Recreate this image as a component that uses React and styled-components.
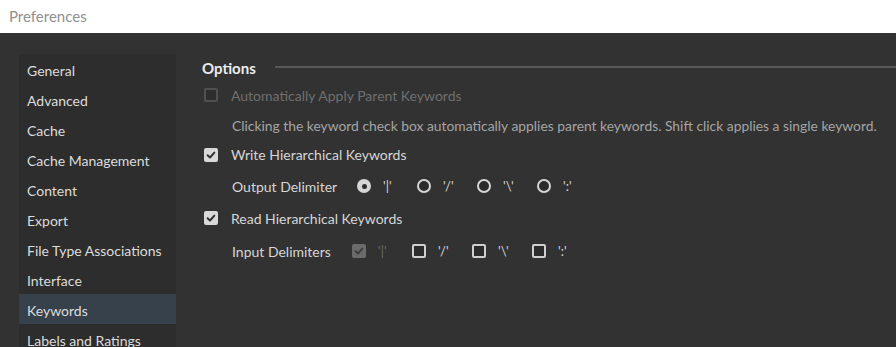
import React from "react";
import styled, { createGlobalStyle, css } from "styled-components";

const Global = createGlobalStyle`
  html, body { margin: 0; padding: 0; background: #323232; }
  body { font-family: Lato, "Noto Sans", sans-serif; overflow: hidden; }
`;

const Window = styled.div`
  width: 896px;
  height: 347px;
  display: flex;
  flex-direction: column;
  background: #323232;
`;

const TitleBar = styled.div`
  height: 33px;
  flex: none;
  background: #ffffff;
  color: #8f8f8f;
  font-size: 15px;
  display: flex;
  align-items: center;
  padding-left: 9px;
  padding-bottom: 2px;
  box-sizing: border-box;
`;

const Body = styled.div`
  flex: 1;
  display: flex;
  padding: 21px 0 0 19px;
  min-height: 0;
`;

const Sidebar = styled.nav`
  width: 157px;
  flex: none;
  background: #2d2d2d;
  display: flex;
  flex-direction: column;
`;

const NavItem = styled.div`
  height: 30px;
  flex: none;
  display: flex;
  align-items: center;
  padding-left: 8px;
  padding-top: 2px;
  box-sizing: border-box;
  font-size: 14px;
  color: #dcdcdc;
  background: ${(p) => (p.$active ? "#36414c" : "transparent")};
`;

const Main = styled.section`
  flex: 1;
  margin-left: 26px;
  display: flex;
  flex-direction: column;
`;

const Heading = styled.div`
  height: 24px;
  display: flex;
  align-items: center;
  gap: 19px;
  font-size: 15px;
  font-weight: 700;
  color: #ececec;
  margin-top: 2px;
`;

const Rule = styled.div`
  flex: 1;
  height: 2px;
  background: #585858;
  margin-top: -3px;
`;

const Row = styled.div`
  height: ${(p) => p.$h}px;
  display: flex;
  align-items: center;
  padding-left: ${(p) => (p.$indent ? 30 : 2)}px;
  font-size: ${(p) => p.$size || 14}px;
  color: ${(p) => p.$color || "#d6d6d6"};
`;

const Label = styled.span`
  margin-left: 13px;
`;

const GroupLabel = styled.span`
  width: ${(p) => p.$w}px;
  flex: none;
`;

const Option = styled.div`
  display: flex;
  align-items: center;
  width: 60px;
  flex: none;
`;

const OptText = styled.span`
  margin-left: ${(p) => p.$gap || 12}px;
  font-size: 13px;
  color: ${(p) => (p.$disabled ? "#6a6a6a" : "#d6d6d6")};
`;

const Box = styled.span`
  width: 14px;
  height: 14px;
  flex: none;
  box-sizing: border-box;
  border-radius: 2px;
  display: inline-flex;
  align-items: center;
  justify-content: center;
  ${(p) =>
    p.$checked
      ? css`
          background: ${p.$disabled ? "#6b6b6b" : "#d9d9d9"};
        `
      : css`
          border: 2px solid ${p.$disabled ? "#505050" : "#cfcfcf"};
          background: ${p.$disabled ? "#2e2e2e" : "#2b2b2b"};
        `}
`;

const Radio = styled.span`
  width: 14px;
  height: 14px;
  flex: none;
  box-sizing: border-box;
  border-radius: 50%;
  display: inline-flex;
  align-items: center;
  justify-content: center;
  ${(p) =>
    p.$checked
      ? css`
          background: #d6d6d6;
          &::after {
            content: "";
            width: 5px;
            height: 5px;
            border-radius: 50%;
            background: #2e2e2e;
          }
        `
      : css`
          border: 2px solid #d6d6d6;
          background: #2b2b2b;
        `}
`;

const Check = ({ color }) => (
  <svg width="10" height="10" viewBox="0 0 10 10">
    <path
      d="M1.6 5.2 L4 7.5 L8.4 2.6"
      fill="none"
      stroke={color}
      strokeWidth="1.9"
      strokeLinecap="round"
      strokeLinejoin="round"
    />
  </svg>
);

const Checkbox = ({ checked, disabled }) => (
  <Box $checked={checked} $disabled={disabled}>
    {checked && <Check color={disabled ? "#3c3c3c" : "#2f2f2f"} />}
  </Box>
);

const navItems = [
  "General",
  "Advanced",
  "Cache",
  "Cache Management",
  "Content",
  "Export",
  "File Type Associations",
  "Interface",
  "Keywords",
  "Labels and Ratings",
];

const delims = ["'|'", "'/'", "'\\'", "':'"];

export default function App() {
  return (
    <>
      <Global />
      <Window>
        <TitleBar>Preferences</TitleBar>
        <Body>
          <Sidebar>
            {navItems.map((n) => (
              <NavItem key={n} $active={n === "Keywords"}>
                {n}
              </NavItem>
            ))}
          </Sidebar>
          <Main>
            <Heading>
              Options
              <Rule />
            </Heading>
            <Row $h={30} $color="#6f6f6f">
              <Checkbox disabled />
              <Label>Automatically Apply Parent Keywords</Label>
            </Row>
            <Row $h={30} $indent $color="#a5a5a5" $size={13.85}>
              Clicking the keyword check box automatically applies parent keywords. Shift click applies a single keyword.
            </Row>
            <Row $h={29}>
              <Checkbox checked />
              <Label>Write Hierarchical Keywords</Label>
            </Row>
            <Row $h={34} $indent>
              <GroupLabel $w={125}>Output Delimiter</GroupLabel>
              {delims.map((d, i) => (
                <Option key={d}>
                  <Radio $checked={i === 0} />
                  <OptText>{d}</OptText>
                </Option>
              ))}
            </Row>
            <Row $h={30}>
              <Checkbox checked />
              <Label>Read Hierarchical Keywords</Label>
            </Row>
            <Row $h={36} $indent>
              <GroupLabel $w={120}>Input Delimiters</GroupLabel>
              {delims.map((d, i) => (
                <Option key={d}>
                  <Checkbox checked={i === 0} disabled={i === 0} />
                  <OptText $disabled={i === 0}>{d}</OptText>
                </Option>
              ))}
            </Row>
          </Main>
        </Body>
      </Window>
    </>
  );
}
